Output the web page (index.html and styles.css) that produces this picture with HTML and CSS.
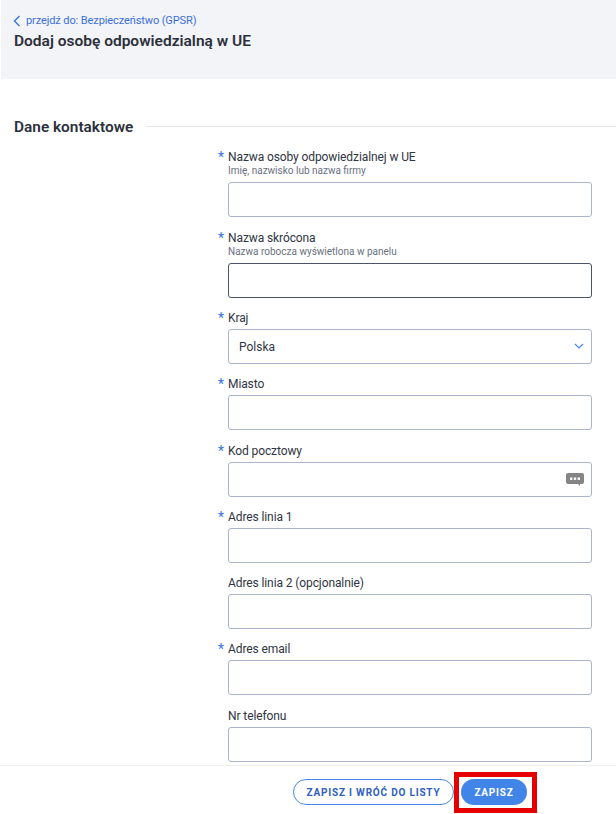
FILE: index.html
```html
<!DOCTYPE html>
<html lang="pl">
<head>
    <meta charset="UTF-8">
    <meta name="viewport" content="width=device-width, initial-scale=1.0">
    <title>Dodaj osobę odpowiedzialną w UE</title>
    <link rel="stylesheet" href="styles.css">
</head>
<body>
    <div class="page">
        <!-- Header -->
        <div class="page-header">
            <a class="back-link" href="#">
                <svg class="back-icon" viewBox="0 0 8 12" width="8" height="12"><path d="M6.5 1 1.5 6l5 5" fill="none" stroke="#3b74e0" stroke-width="1.4"/></svg>
                <span>przejdź do: Bezpieczeństwo (GPSR)</span>
            </a>
            <h1>Dodaj osobę odpowiedzialną w UE</h1>
        </div>

        <!-- Form -->
        <div class="content">
            <div class="section-title">
                <h2>Dane kontaktowe</h2>
                <div class="section-line"></div>
            </div>
            <div class="form">
                <div class="field">
                    <label class="required">Nazwa osoby odpowiedzialnej w UE</label>
                    <div class="hint">Imię, nazwisko lub nazwa firmy</div>
                    <div class="input"></div>
                </div>
                <div class="field">
                    <label class="required">Nazwa skrócona</label>
                    <div class="hint">Nazwa robocza wyświetlona w panelu</div>
                    <div class="input input-focus"></div>
                </div>
                <div class="field">
                    <label class="required">Kraj</label>
                    <div class="input">
                        <span class="value">Polska</span>
                        <svg viewBox="0 0 10 6" width="10" height="6"><path d="M1 1 5 5l4-4" fill="none" stroke="#4a86e8" stroke-width="1.2"/></svg>
                    </div>
                </div>
                <div class="field">
                    <label class="required">Miasto</label>
                    <div class="input"></div>
                </div>
                <div class="field">
                    <label class="required">Kod pocztowy</label>
                    <div class="input">
                        <span class="value"></span>
                        <svg viewBox="0 0 18 13" width="18" height="13"><path d="M2 0h14a2 2 0 0 1 2 2v7a2 2 0 0 1-2 2h-2v2l-2-2H2a2 2 0 0 1-2-2V2a2 2 0 0 1 2-2z" fill="#858585"/><rect x="4" y="4.5" width="2.4" height="2.4" fill="#fff"/><rect x="7.8" y="4.5" width="2.4" height="2.4" fill="#fff"/><rect x="11.6" y="4.5" width="2.4" height="2.4" fill="#fff"/></svg>
                    </div>
                </div>
                <div class="field">
                    <label class="required">Adres linia 1</label>
                    <div class="input"></div>
                </div>
                <div class="field">
                    <label>Adres linia 2 (opcjonalnie)</label>
                    <div class="input"></div>
                </div>
                <div class="field">
                    <label class="required">Adres email</label>
                    <div class="input"></div>
                </div>
                <div class="field">
                    <label>Nr telefonu</label>
                    <div class="input"></div>
                </div>
            </div>
        </div>

        <!-- Footer -->
        <div class="footer">
            <button class="btn btn-outline">ZAPISZ I WRÓĆ DO LISTY</button>
            <button class="btn btn-primary">ZAPISZ</button>
            <div class="highlight"></div>
        </div>
    </div>
</body>
</html>
```

FILE: styles.css
```css
* {
    box-sizing: border-box;
    margin: 0;
    padding: 0;
}

html, body {
    height: 100%;
    overflow: hidden;
}

body {
    background-color: white;
    font-family: Roboto, Arial, sans-serif;
    color: #2f3542;
}

.page {
    display: flex;
    flex-direction: column;
    height: 814px;
}

.page-header {
    height: 79px;
    margin-left: 1px;
    padding: 11px 12px 0;
    background-color: #f3f4f8;
    flex-shrink: 0;
}

.back-link {
    display: flex;
    align-items: center;
    gap: 5px;
    height: 19px;
    font-size: 11px;
    letter-spacing: -0.1px;
    color: #3b6fd8;
    text-decoration: none;
}

.back-icon {
    flex-shrink: 0;
}

h1 {
    margin-left: 1px;
    font-size: 15.5px;
    line-height: 22px;
    font-weight: 600;
    color: #2b303b;
}

.content {
    flex: 1;
    min-height: 0;
    overflow: hidden;
    padding: 38px 24px 0 14px;
}

.section-title {
    display: flex;
    align-items: center;
    gap: 13px;
    height: 20px;
}

h2 {
    font-size: 15.4px;
    font-weight: 600;
    color: #2b303b;
    white-space: nowrap;
}

.section-line {
    flex: 1;
    height: 1px;
    margin-right: -24px;
    margin-bottom: 2px;
    background-color: #e6e7ea;
}

.form {
    margin-top: 11.4px;
    padding-left: 214px;
}

.field {
    margin-bottom: 11.3px;
}

label {
    position: relative;
    display: block;
    margin-bottom: 2px;
    font-size: 12px;
    letter-spacing: -0.1px;
    line-height: 18px;
    color: #2f3542;
}

.required::before {
    content: "*";
    position: absolute;
    left: -10px;
    top: 0;
    font-size: 14px;
    color: #3b74e0;
}

.hint {
    margin-top: -4px;
    margin-bottom: 4px;
    font-size: 10px;
    line-height: 14px;
    color: #6a7080;
}

.input {
    display: flex;
    align-items: center;
    justify-content: space-between;
    height: 35px;
    padding: 0 7px 0 10px;
    border: 1px solid #aab4cc;
    border-radius: 3px;
    font-size: 12px;
    background-color: white;
}

.value {
    padding-top: 2px;
}

.input-focus {
    border-color: #4b5368;
}

.footer {
    position: relative;
    display: flex;
    justify-content: flex-end;
    align-items: flex-start;
    gap: 7px;
    height: 49px;
    padding: 13px 89px 0 0;
    border-top: 1px solid #eeeff2;
    background-color: white;
    flex-shrink: 0;
}

.btn {
    height: 26px;
    border-radius: 13px;
    font-family: Roboto, Arial, sans-serif;
    font-size: 10px;
    font-weight: 700;
    letter-spacing: 0.8px;
    cursor: pointer;
}

.btn-outline {
    width: 161px;
    border: 1px solid #4a86e8;
    background-color: white;
    color: #2f5fc0;
}

.btn-primary {
    width: 66px;
    border: none;
    background-color: #4285e8;
    color: white;
}

.highlight {
    position: absolute;
    left: 454px;
    top: 6px;
    width: 83px;
    height: 41px;
    border: 5px solid #e60000;
    pointer-events: none;
}
```
